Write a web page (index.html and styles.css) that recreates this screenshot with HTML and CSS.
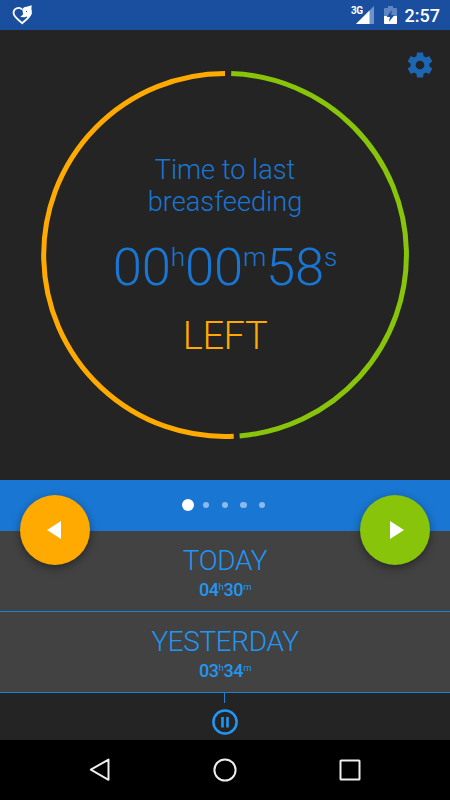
FILE: index.html
```
<!DOCTYPE html>
<html lang="en">
<head>
    <meta charset="UTF-8">
    <meta name="viewport" content="width=device-width, initial-scale=1.0">
    <title>Breastfeeding timer</title>
    <link rel="stylesheet" href="styles.css">
</head>
<body>
    <div class="status-bar">
        <svg class="app-icon" width="22" height="22" viewBox="0 0 22 22">
            <path d="M11 4.5C8.5 1.5 2.2 3 2.6 8.3C2.8 12 8 15.3 11.2 18.2C14.2 15.3 19.7 12.2 19.6 7.8" fill="none" stroke="#fff" stroke-width="1.9" stroke-linejoin="round"/>
            <path d="M11.2 4.6Q12.4 1.6 15.6 1.7L20.7 .3L20.4 4Q21.6 8 19.8 10.5Q18 13.4 15.5 11.6L13.7 12.3L9.3 12L12.2 9.3Z" fill="#fff"/>
            <path d="M15 6.5h1" stroke="#1a4fa0" stroke-width="1"/>
        </svg>
        <div class="status-right">
            <span class="network">3G</span>
            <svg class="signal" width="18" height="18" viewBox="0 0 18 18">
                <path d="M18 0V18H0Z" fill="#6f93c8"/>
                <path d="M13.5 4.5V18H0Z" fill="#fff"/>
            </svg>
            <svg class="battery" width="13" height="18" viewBox="0 0 13 18">
                <path d="M4 0h5v2h3.2q.8 0 .8.8V10H0V2.8Q0 2 .8 2H4Z" fill="#5f86c2"/>
                <path d="M0 10h13v7.2q0 .8-.8.8H.8Q0 18 0 17.2Z" fill="#fff"/>
                <path d="M7.8 4L2.7 11H6L4.8 16L10.5 9H7.2Z" fill="#1a4fa0"/>
            </svg>
            <span class="clock">2:57</span>
        </div>
    </div>

    <div class="timer">
        <svg class="ring" width="370" height="370" viewBox="-185 -185 370 370">
            <path d="M8.7 181.3A181.5 181.5 0 1 1 0 -181.5" stroke="#ffaa00"/>
            <path d="M6.2 -181.4A181.5 181.5 0 0 1 14.6 180.9" stroke="#88c409"/>
        </svg>
        <svg class="settings" width="30" height="30" viewBox="0 0 24 24">
            <path fill="#1c67b3" d="M19.43 12.98c.04-.32.07-.64.07-.98s-.03-.66-.07-.98l2.11-1.65c.19-.15.24-.42.12-.64l-2-3.46c-.12-.22-.39-.3-.61-.22l-2.49 1c-.52-.4-1.08-.73-1.69-.98l-.38-2.65C14.46 2.18 14.25 2 14 2h-4c-.25 0-.46.18-.49.42l-.38 2.65c-.61.25-1.17.59-1.69.98l-2.49-1c-.23-.09-.49 0-.61.22l-2 3.46c-.13.22-.07.49.12.64l2.11 1.65c-.04.32-.07.65-.07.98s.03.66.07.98l-2.11 1.65c-.19.15-.24.42-.12.64l2 3.46c.12.22.39.3.61.22l2.49-1c.52.4 1.08.73 1.69.98l.38 2.65c.03.24.24.42.49.42h4c.25 0 .46-.18.49-.42l.38-2.65c.61-.25 1.17-.59 1.69-.98l2.49 1c.23.09.49 0 .61-.22l2-3.46c.12-.22.07-.49-.12-.64l-2.11-1.65zM12 15.5c-1.93 0-3.5-1.57-3.5-3.5s1.57-3.5 3.5-3.5 3.5 1.57 3.5 3.5-1.57 3.5-3.5 3.5z"/>
        </svg>
        <div class="timer-label">Time to last<br>breasfeeding</div>
        <div class="timer-value">00<span>h</span>00<span>m</span>58<span>s</span></div>
        <div class="timer-side">LEFT</div>
    </div>

    <div class="pager">
        <button class="fab left">
            <svg width="14" height="18" viewBox="0 0 14 18"><path d="M14 0V18L0 9Z" fill="#fff"/></svg>
        </button>
        <div class="dots">
            <i class="active"></i><i></i><i></i><i></i><i></i>
        </div>
        <button class="fab right">
            <svg width="14" height="18" viewBox="0 0 14 18"><path d="M0 0V18L14 9Z" fill="#fff"/></svg>
        </button>
    </div>

    <div class="day">
        <h2>TODAY</h2>
        <p>04<span>h</span>30<span>m</span></p>
    </div>
    <div class="day">
        <h2>YESTERDAY</h2>
        <p>03<span>h</span>34<span>m</span></p>
    </div>

    <div class="timeline">
        <div class="line"></div>
        <svg width="26" height="26" viewBox="0 0 26 26">
            <circle cx="13" cy="13" r="11.6" fill="none" stroke="#2196f3" stroke-width="2.5"/>
            <path d="M10.5 8V18.4M15.5 8V18.4" stroke="#2196f3" stroke-width="2.6"/>
        </svg>
    </div>

    <div class="nav-bar">
        <svg width="24" height="26" viewBox="0 0 24 26"><path d="M20.5 2.6V22.8L2.8 12.7Z"/></svg>
        <svg width="24" height="26" viewBox="0 0 24 26"><circle cx="12" cy="13" r="10.6"/></svg>
        <svg width="24" height="26" viewBox="0 0 24 26"><rect x="2.5" y="3.5" width="19" height="19" rx=".6"/></svg>
    </div>
</body>
</html>
```
FILE: styles.css
```
* {
    box-sizing: border-box;
}
body {
    font-family: Roboto, sans-serif;
    background-color: #242424;
    color: #1976d2;
    margin: 0;
    height: 800px;
    overflow: hidden;
}
.status-bar {
    height: 30px;
    background-color: #1a4fa0;
    color: white;
    display: flex;
    justify-content: space-between;
    padding: 0 10px 0 11px;
}
.app-icon {
    margin-top: 5px;
}
.status-right {
    display: flex;
    align-items: flex-start;
}
.network {
    font-size: 10px;
    line-height: 12px;
    font-weight: 700;
    letter-spacing: -0.5px;
    margin-top: 5px;
    margin-right: -7px;
}
.signal {
    margin-top: 6px;
    margin-right: 10px;
}
.battery {
    margin-top: 6px;
    margin-right: 8px;
}
.clock {
    font-size: 18px;
    font-weight: 500;
    line-height: 31px;
}
.timer {
    position: relative;
    height: 450px;
    padding-top: 124px;
    text-align: center;
    font-weight: 300;
}
.ring {
    position: absolute;
    top: 40px;
    left: 40px;
    fill: none;
    stroke-width: 5;
}
.settings {
    position: absolute;
    top: 20px;
    right: 15px;
}
.timer-label {
    font-size: 27.2px;
    line-height: 32px;
}
.timer-value {
    font-size: 52.6px;
    letter-spacing: -0.2px;
    line-height: 62px;
    margin-top: 18px;
}
.timer-value span {
    font-size: 26.3px;
    line-height: 0;
    position: relative;
    top: -19px;
}
.timer-side {
    color: #ffaa00;
    font-size: 38px;
    letter-spacing: -0.4px;
    line-height: 44px;
    margin-top: 16px;
}
.pager {
    height: 51px;
    background-color: #1976d2;
    display: flex;
    justify-content: center;
    position: relative;
}
.dots {
    display: flex;
    align-items: center;
    gap: 12.3px;
    margin-right: 3px;
    margin-top: -1px;
}
.dots i {
    width: 6.4px;
    height: 6.4px;
    border-radius: 50%;
    background-color: #8cbae8;
}
.dots .active {
    width: 12px;
    height: 12px;
    margin-right: -3px;
    background-color: white;
}
.fab {
    position: absolute;
    top: 15px;
    width: 70px;
    height: 70px;
    padding: 0;
    border: none;
    border-radius: 50%;
    display: flex;
    align-items: center;
    justify-content: center;
    box-shadow: 0 3px 8px rgba(0, 0, 0, 0.4);
}
.fab.left {
    left: 20px;
    background-color: #ffaa00;
}
.fab.right {
    right: 20px;
    background-color: #88c409;
}
.fab.left svg {
    margin-right: 3px;
}
.fab.right svg {
    margin-left: 3px;
}
.day {
    height: 81px;
    background-color: #424242;
    border-bottom: 1px solid #1e80d0;
    color: #2196f3;
    text-align: center;
    padding-top: 13px;
}
.day h2 {
    margin: 0;
    font-size: 28px;
    font-weight: 300;
    letter-spacing: -0.4px;
    line-height: 34px;
}
.day p {
    margin: 1px 0 0;
    font-size: 18px;
    font-weight: 500;
    letter-spacing: -0.4px;
    line-height: 22px;
}
.day p span {
    font-size: 9.5px;
    font-weight: 400;
    line-height: 0;
    position: relative;
    top: -6px;
}
.timeline {
    height: 47px;
    display: flex;
    flex-direction: column;
    align-items: center;
}
.timeline .line {
    width: 1px;
    height: 10px;
    margin-right: 1px;
    margin-bottom: 6px;
    background-color: #1e80d0;
}
.nav-bar {
    height: 60px;
    background-color: black;
    display: flex;
    align-items: center;
    justify-content: center;
    gap: 101px;
    fill: none;
    stroke: #eee;
    stroke-width: 2;
    stroke-linejoin: round;
}
```
